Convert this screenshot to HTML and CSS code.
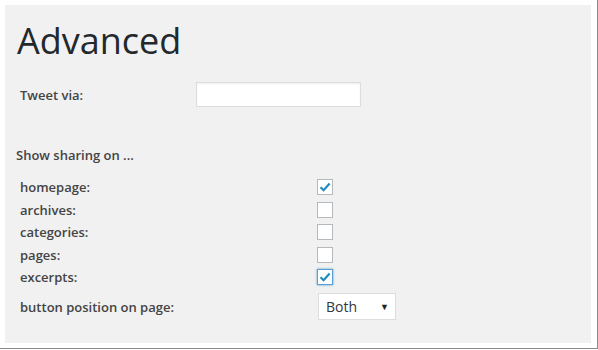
FILE: index.html
```html
<!DOCTYPE html>
<html lang="en">
<head>
    <meta charset="UTF-8">
    <title>Advanced</title>
    <link rel="stylesheet" href="styles.css">
</head>
<body>
    <div class="frame">
        <div class="panel">
            <h1>Advanced</h1>

            <div class="tweet-row">
                <label class="tweet-label">Tweet via:</label>
                <input class="text-input" type="text">
            </div>

            <h3 class="section-title">Show sharing on ...</h3>

            <div class="options">
                <div class="option-row">
                    <span class="option-label">homepage:</span>
                    <span class="check checked">
                        <svg width="12" height="10" viewBox="0 0 12 10"><path d="M1.5 5.2 L4.6 8.2 L10.6 1.6" fill="none" stroke="#1e8cbe" stroke-width="2.2"/></svg>
                    </span>
                </div>
                <div class="option-row">
                    <span class="option-label">archives:</span>
                    <span class="check"></span>
                </div>
                <div class="option-row">
                    <span class="option-label">categories:</span>
                    <span class="check"></span>
                </div>
                <div class="option-row">
                    <span class="option-label">pages:</span>
                    <span class="check"></span>
                </div>
                <div class="option-row">
                    <span class="option-label">excerpts:</span>
                    <span class="check checked focused">
                        <svg width="12" height="10" viewBox="0 0 12 10"><path d="M1.5 5.2 L4.6 8.2 L10.6 1.6" fill="none" stroke="#1e8cbe" stroke-width="2.2"/></svg>
                    </span>
                </div>
                <div class="option-row select-row">
                    <span class="option-label">button position on page:</span>
                    <div class="select-box">
                        <span>Both</span>
                        <span class="arrow">&#9660;</span>
                    </div>
                </div>
            </div>
        </div>
    </div>
</body>
</html>
```

FILE: styles.css
```css
body {
    margin: 0;
    background: #fff;
    font-family: "Open Sans", sans-serif;
    color: #444;
}

.frame {
    width: 592px;
    height: 343px;
    padding: 5px 0 0 5px;
    border-right: 1px solid #8a8a8a;
    border-bottom: 1px solid #8a8a8a;
    box-shadow: 1px 1px 1px rgba(0, 0, 0, 0.25);
}

.panel {
    width: 586px;
    height: 338px;
    background: #f1f1f1;
    box-sizing: border-box;
    padding: 12px 0 0 11px;
}

h1 {
    margin: 0 0 0 1px;
    font-size: 36px;
    line-height: 48px;
    font-weight: 400;
    color: #23282d;
}

.tweet-row {
    display: flex;
    align-items: center;
    margin-top: 17px;
    padding-left: 4px;
}

.tweet-label {
    width: 176px;
    font-size: 13px;
    font-weight: 600;
}

.text-input {
    width: 165px;
    height: 25px;
    box-sizing: border-box;
    border: 1px solid #ddd;
    box-shadow: inset 0 1px 2px rgba(0, 0, 0, 0.07);
    background: #fff;
    margin: 0;
}

.section-title {
    margin: 38px 0 0 0;
    font-size: 13px;
    font-weight: 600;
    line-height: 20px;
}

.options {
    margin-top: 11px;
    padding-left: 4px;
}

.option-row {
    display: flex;
    align-items: center;
    height: 22.5px;
}

.option-label {
    width: 297px;
    font-size: 13px;
    font-weight: 600;
}

.check {
    width: 16px;
    height: 16px;
    box-sizing: border-box;
    border: 1px solid #b4b9be;
    background: #fff;
    display: flex;
    align-items: center;
    justify-content: center;
}

.check.focused {
    border-color: #5b9dd9;
    box-shadow: 0 0 2px rgba(30, 140, 190, 0.8);
}

.select-row {
    height: 28px;
    margin-top: 4px;
}

.select-box {
    width: 78px;
    height: 27px;
    box-sizing: border-box;
    margin-left: 1px;
    border: 1px solid #ddd;
    background: #fff;
    display: flex;
    align-items: center;
    justify-content: space-between;
    padding: 0 6px 0 7px;
    font-size: 14px;
    color: #32373c;
}

.arrow {
    font-size: 9px;
    color: #222;
}
```
